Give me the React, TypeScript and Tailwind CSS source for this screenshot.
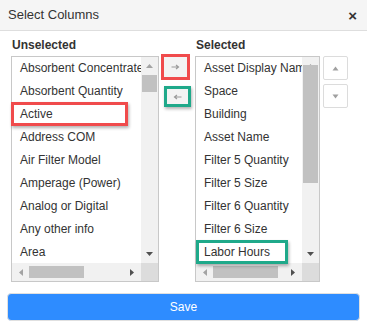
import React from "react";

const leftItems = [
  "Absorbent Concentrate",
  "Absorbent Quantity",
  "Active",
  "Address COM",
  "Air Filter Model",
  "Amperage (Power)",
  "Analog or Digital",
  "Any other info",
  "Area",
];
const rightItems = [
  "Asset Display Name",
  "Space",
  "Building",
  "Asset Name",
  "Filter 5 Quantity",
  "Filter 5 Size",
  "Filter 6 Quantity",
  "Filter 6 Size",
  "Labor Hours",
];

function ListBox({
  items,
  width,
  thumbTop,
  thumbH,
  hThumbLeft,
  hThumbW,
  children,
}: {
  items: string[];
  width: number;
  thumbTop: number;
  thumbH: number;
  hThumbLeft: number;
  hThumbW: number;
  children?: React.ReactNode;
}) {
  return (
    <div
      className="relative h-[226px] border border-[#c8c8c8] bg-white"
      style={{ width }}
    >
      <div className="flex h-full flex-col">
        <div className="flex flex-1 overflow-hidden">
          <div className="flex-1 overflow-hidden">
            {items.map((t) => (
              <div
                key={t}
                className="h-[23px] whitespace-nowrap pl-[8px] text-[12px] leading-[23px] text-[#333]"
              >
                {t}
              </div>
            ))}
          </div>
          <div className="relative w-[17px] bg-[#f1f1f1]">
            <svg className="absolute left-[4px] top-[6px]" width="9" height="6" viewBox="0 0 9 6">
              <path d="M4.5 1 L8 5 L1 5 Z" fill="#a3a3a3" />
            </svg>
            <div
              className="absolute left-[1px] w-[15px] bg-[#c1c1c1]"
              style={{ top: thumbTop, height: thumbH }}
            />
            <svg className="absolute bottom-[6px] left-[4px]" width="9" height="6" viewBox="0 0 9 6">
              <path d="M1 1 L8 1 L4.5 5 Z" fill="#505050" />
            </svg>
          </div>
        </div>
        <div className="flex h-[18px]">
          <div className="relative flex-1 bg-[#f1f1f1]">
            <svg className="absolute left-[6px] top-[5px]" width="6" height="9" viewBox="0 0 6 9">
              <path d="M5 1 L5 8 L1 4.5 Z" fill="#a3a3a3" />
            </svg>
            <div
              className="absolute top-[3px] h-[12px] bg-[#c1c1c1]"
              style={{ left: hThumbLeft, width: hThumbW }}
            />
            <svg className="absolute right-[6px] top-[5px]" width="6" height="9" viewBox="0 0 6 9">
              <path d="M1 1 L5 4.5 L1 8 Z" fill="#505050" />
            </svg>
          </div>
          <div className="w-[17px] bg-[#dcdcdc]" />
        </div>
      </div>
      {children}
    </div>
  );
}

export default function App() {
  return (
    <div
      className="h-[327px] w-[367px] overflow-hidden bg-white"
      style={{ fontFamily: '"Liberation Sans", Arial, sans-serif' }}
    >
      <div className="flex h-[31px] items-center justify-between border-b border-[#dedede] bg-[#f5f5f5] pl-[8px] pr-[10px]">
        <span className="text-[13px] text-[#333]">Select Columns</span>
        <span className="text-[15px] font-bold leading-none text-[#333]">×</span>
      </div>
      <div className="flex pl-[11px] pt-[7px]">
        <div className="flex flex-col">
          <div className="h-[18px] pl-[1px] text-[12px] font-bold leading-[14px] text-[#333]">
            Unselected
          </div>
          <ListBox items={leftItems} width={148} thumbTop={18} thumbH={17} hThumbLeft={17} hThumbW={55}>
            <div className="pointer-events-none absolute left-[-1px] top-[45px] h-[24px] w-[117px] border-[3px] border-[#f04b4c] shadow-[1px_2px_3px_rgba(0,0,0,0.3)]" />
          </ListBox>
        </div>
        <div className="ml-[2px] flex w-[32px] flex-col items-start pt-[16px]">
          <div className="flex h-[26px] w-[29px] items-center justify-center border-[3px] border-[#f04b4c] bg-[#f3f3f3]">
            <svg width="9" height="6" viewBox="0 0 9 6">
              <path d="M0.5 3 H7 M5 1 L7.5 3 L5 5" stroke="#9a9a9a" strokeWidth="1.2" fill="none" />
            </svg>
          </div>
          <div className="ml-[3px] mt-[6px] flex h-[21px] w-[27px] items-center justify-center border-[3px] border-[#1fa98a] bg-[#f3f3f3] shadow-[1px_2px_3px_rgba(0,0,0,0.3)]">
            <svg width="9" height="6" viewBox="0 0 9 6">
              <path d="M8.5 3 H2 M4 1 L1.5 3 L4 5" stroke="#9a9a9a" strokeWidth="1.2" fill="none" />
            </svg>
          </div>
        </div>
        <div className="ml-[2px] flex flex-col">
          <div className="h-[18px] pl-[1px] text-[12px] font-bold leading-[14px] text-[#333]">
            Selected
          </div>
          <ListBox items={rightItems} width={125} thumbTop={8} thumbH={118} hThumbLeft={17} hThumbW={65}>
            <div className="pointer-events-none absolute left-[0px] top-[183px] h-[24px] w-[92px] border-[3px] border-[#1fa98a] shadow-[1px_2px_3px_rgba(0,0,0,0.3)]" />
          </ListBox>
        </div>
        <div className="ml-[3px] flex flex-col gap-[4px] pt-[18px]">
          <div className="flex h-[24px] w-[25px] items-center justify-center rounded-[2px] border border-[#dcdcdc] bg-white">
            <svg width="7" height="5" viewBox="0 0 7 5">
              <path d="M3.5 0.5 L6.5 4.5 L0.5 4.5 Z" fill="#a0a0a0" />
            </svg>
          </div>
          <div className="flex h-[24px] w-[25px] items-center justify-center rounded-[2px] border border-[#dcdcdc] bg-white">
            <svg width="7" height="5" viewBox="0 0 7 5">
              <path d="M0.5 0.5 L6.5 0.5 L3.5 4.5 Z" fill="#a0a0a0" />
            </svg>
          </div>
        </div>
      </div>
      <div className="px-[7px] pt-[11px]">
        <button className="flex h-[28px] w-full items-center justify-center rounded-[4px] border border-[#e0e0e0] bg-[#2e8cff] text-[12px] font-normal text-white">
          Save
        </button>
      </div>
    </div>
  );
}
